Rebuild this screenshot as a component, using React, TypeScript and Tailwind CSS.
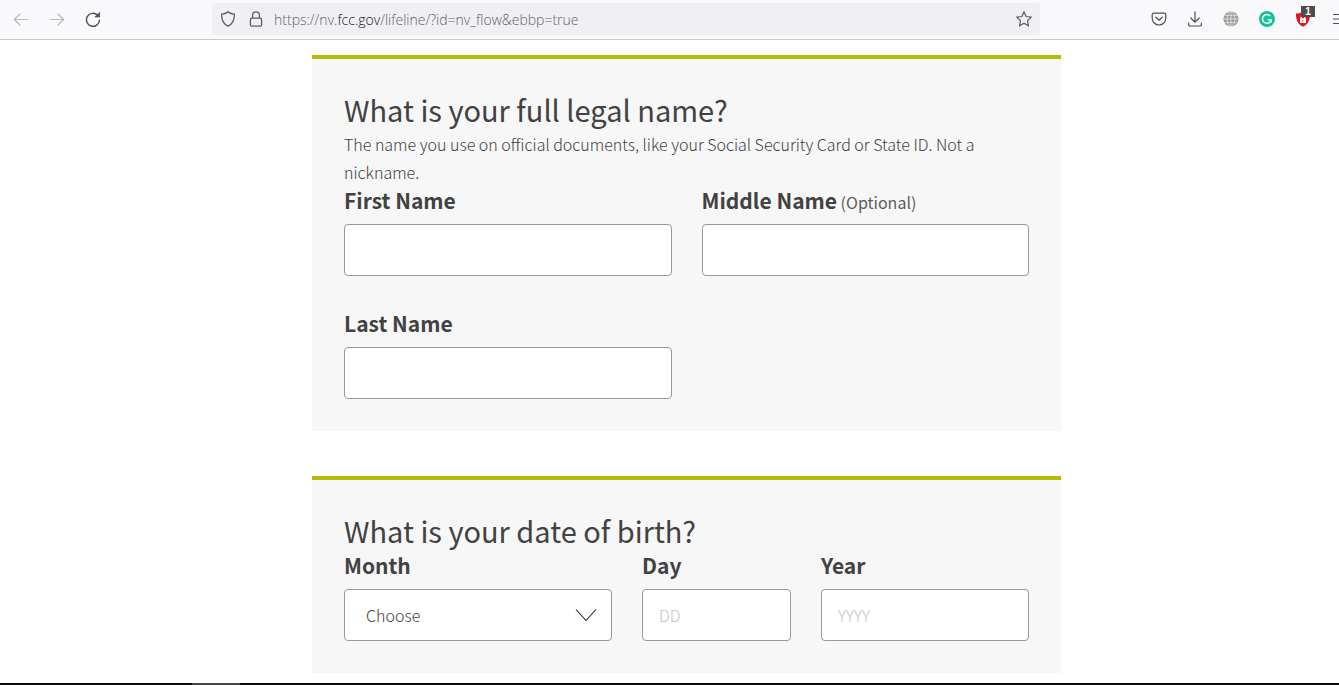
import { useState } from "react";
import type { ReactNode } from "react";

const labelClass = "block mb-[10px] text-[21px] leading-7 font-semibold";

const fieldClass =
  "w-full h-[52px] px-4 bg-white border border-[#999] rounded text-base font-light text-[#424242] placeholder:text-[#c4c4c4]";

const months = [
  "January",
  "February",
  "March",
  "April",
  "May",
  "June",
  "July",
  "August",
  "September",
  "October",
  "November",
  "December",
];

function ToolbarButton({ label, children }: { label: string; children: ReactNode }) {
  return (
    <button type="button" aria-label={label} className="flex w-9 h-9 shrink-0 items-center justify-center">
      {children}
    </button>
  );
}

function BrowserToolbar() {
  return (
    <header className="flex h-10 pb-px items-center border-b border-[#c8c8ca] bg-[#f9f9fb] overflow-hidden">
      <nav className="flex pl-[3px]">
        <ToolbarButton label="Back">
          <svg width="16" height="16" viewBox="0 0 16 16" fill="none" stroke="#b9b9be" strokeWidth="1.2" strokeLinecap="round" strokeLinejoin="round">
            <path d="M14.5 8.5H1.5M7 3L1.3 8.5L7 14" />
          </svg>
        </ToolbarButton>
        <ToolbarButton label="Forward">
          <svg width="16" height="16" viewBox="0 0 16 16" fill="none" stroke="#b9b9be" strokeWidth="1.2" strokeLinecap="round" strokeLinejoin="round">
            <path d="M1.5 8.5H14.5M9 3L14.7 8.5L9 14" />
          </svg>
        </ToolbarButton>
        <ToolbarButton label="Reload">
          <svg width="16" height="16" viewBox="0 0 16 16" fill="none" stroke="#4e4d58" strokeWidth="1.4" strokeLinecap="round">
            <path d="M12.6 4.2A6.5 6.5 0 1 0 14.5 9.1" />
            <path d="M14.6 1.7V5.9H10.4Z" fill="#4e4d58" strokeWidth="0.8" strokeLinejoin="round" />
          </svg>
        </ToolbarButton>
      </nav>

      <div className="flex flex-1 h-8 ml-[101px] mr-[101px] px-2 items-center rounded bg-[#f0f0f4]">
        <svg className="shrink-0" width="16" height="16" viewBox="0 0 16 16" fill="none" stroke="#5b5b66" strokeWidth="1.3" strokeLinejoin="round">
          <path d="M8 0.9Q10.8 2.9 14.4 3.2C14.6 8.6 12.6 12.9 8 15.2C3.4 12.9 1.4 8.6 1.6 3.2Q5.2 2.9 8 0.9Z" />
        </svg>
        <svg className="shrink-0 ml-3" width="16" height="16" viewBox="0 0 16 16" fill="none" stroke="#5b5b66" strokeWidth="1.3">
          <rect x="2.4" y="7.2" width="11.2" height="7.9" rx="1.6" />
          <path d="M4.6 7.2V4.2A3.4 3.4 0 0 1 11.4 4.2V7.2" />
        </svg>
        <p className="flex-1 ml-[10px] pt-px text-sm font-light text-[#62626a] font-['Open_Sans',sans-serif] whitespace-nowrap">
          https://nv.<span className="text-[#15141a]">fcc.gov</span>/lifeline/?id=nv_flow&amp;ebbp=true
        </p>
        <button type="button" aria-label="Bookmark this page">
          <svg width="16" height="16" viewBox="0 0 16 16" fill="none" stroke="#5b5b66" strokeWidth="1.2" strokeLinejoin="round">
            <path d="M8 0.8L10.1 5.5L15.3 6.1L11.5 9.6L12.5 14.8L8 12.2L3.5 14.8L4.5 9.6L0.7 6.1L5.9 5.5Z" />
          </svg>
        </button>
      </div>

      <div className="flex w-[198px] shrink-0 overflow-hidden">
        <ToolbarButton label="Save to Pocket">
          <svg width="16" height="16" viewBox="0 0 16 16" fill="none" stroke="#4e4d58" strokeWidth="1.2" strokeLinecap="round" strokeLinejoin="round">
            <path d="M2.6 2.2H13.4A1.4 1.4 0 0 1 14.8 3.6V7.2A6.8 6.8 0 0 1 1.2 7.2V3.6A1.4 1.4 0 0 1 2.6 2.2Z" />
            <path d="M4.8 6.2L8 9.2L11.2 6.2" />
          </svg>
        </ToolbarButton>
        <ToolbarButton label="Downloads">
          <svg width="16" height="16" viewBox="0 0 16 16" fill="none" stroke="#4e4d58" strokeWidth="1.2" strokeLinecap="round" strokeLinejoin="round">
            <path d="M8 0.8V11M3.8 7L8 11.2L12.2 7M1.6 12.2V13.6A1.4 1.4 0 0 0 3 15H13A1.4 1.4 0 0 0 14.4 13.6V12.2" />
          </svg>
        </ToolbarButton>
        <ToolbarButton label="Web extension">
          <svg width="16" height="16" viewBox="0 0 16 16" fill="none">
            <circle cx="8" cy="8" r="7.6" fill="#9d9d9d" />
            <path d="M0.5 8H15.5M1.5 4.4H14.5M1.5 11.6H14.5M8 0.5V15.5" stroke="#dcdcdc" strokeWidth="0.9" />
            <ellipse cx="8" cy="8" rx="3.8" ry="7.5" stroke="#dcdcdc" strokeWidth="0.9" />
          </svg>
        </ToolbarButton>
        <ToolbarButton label="Writing assistant">
          <svg width="16" height="16" viewBox="0 0 16 16" fill="none">
            <circle cx="8" cy="8" r="8" fill="#15c39a" />
            <path d="M11.2 5A4.4 4.4 0 1 0 12.2 8.8H8.8M12.2 8.8V11.6" stroke="#fff" strokeWidth="1.4" />
          </svg>
        </ToolbarButton>
        <button type="button" aria-label="Content blocker, 1 blocked" className="relative flex w-9 h-9 shrink-0 items-center justify-center">
          <svg width="16" height="16" viewBox="0 0 16 16">
            <path d="M8 0.5C10 2 12.5 2.6 15 2.6C15.2 8.8 13.2 13.5 8 15.8C2.8 13.5 0.8 8.8 1 2.6C3.5 2.6 6 2 8 0.5Z" fill="#e6141e" />
            <rect x="5" y="7.2" width="6" height="4.8" fill="#fff" />
            <path d="M6.2 7.2V5.6A1.8 1.8 0 0 1 9.8 5.6V7.2" fill="none" stroke="#fff" strokeWidth="1.1" />
            <path d="M8 8.8V10.4" stroke="#e6141e" strokeWidth="0.8" />
          </svg>
          <span className="absolute top-[5px] left-4 w-[14px] h-[11px] bg-[#4d4d4d] text-center text-[10px] leading-[11px] font-bold text-white font-['Liberation_Sans',sans-serif]">
            1
          </span>
        </button>
        <button type="button" aria-label="Open menu" className="flex h-9 shrink-0 items-center pl-[11px]">
          <svg width="16" height="16" viewBox="0 0 16 16" stroke="#4e4d58" strokeWidth="1.2" strokeLinecap="round">
            <path d="M1.5 3.5H14.5M1.5 8H14.5M1.5 12.5H14.5" />
          </svg>
        </button>
      </div>
    </header>
  );
}

function Question({ title, children }: { title: string; children: ReactNode }) {
  return (
    <section className="border-t-4 border-[#b5bd00] bg-[#f7f7f7] p-8">
      <h2 className="mb-[3px] text-[29px] leading-9">{title}</h2>
      {children}
    </section>
  );
}

type FieldProps = {
  id: string;
  label: string;
  optional?: boolean;
  placeholder?: string;
};

function TextField({ id, label, optional, placeholder }: FieldProps) {
  const [value, setValue] = useState("");

  return (
    <div className="min-w-0">
      <label htmlFor={id} className={labelClass}>
        {label}
        {optional && <span className="text-base leading-none font-normal text-[#5c5c5c]"> (Optional)</span>}
      </label>
      <input
        id={id}
        type="text"
        placeholder={placeholder}
        value={value}
        onChange={(e) => setValue(e.target.value)}
        className={fieldClass}
      />
    </div>
  );
}

function MonthField() {
  return (
    <div className="min-w-0">
      <label htmlFor="month" className={labelClass}>
        Month
      </label>
      <div className="relative">
        <select id="month" defaultValue="" className={`${fieldClass} appearance-none pl-[21px]`}>
          <option value="">Choose</option>
          {months.map((month) => (
            <option key={month} value={month}>
              {month}
            </option>
          ))}
        </select>
        <svg
          className="absolute right-[15px] top-5 pointer-events-none"
          width="22"
          height="13"
          viewBox="0 0 22 13"
          fill="none"
          stroke="#222"
          strokeWidth="1.1"
        >
          <path d="M1 0.5L11 11.5L21 0.5" />
        </svg>
      </div>
    </div>
  );
}

export default function App() {
  return (
    <div className="bg-white text-[#424242] font-['Noto_Sans_CJK_SC','Noto_Sans',sans-serif]">
      <BrowserToolbar />

      <main className="pl-[34px] pt-[15px] pb-[10px]">
        <form className="flex flex-col gap-[45px] w-full max-w-[749px] mx-auto" onSubmit={(e) => e.preventDefault()}>
          <Question title="What is your full legal name?">
            <p className="text-base leading-7 font-light">
              The name you use on official documents, like your Social Security Card or State ID. Not a nickname.
            </p>
            <div className="grid grid-cols-2 gap-x-[30px] gap-y-[33px]">
              <TextField id="first-name" label="First Name" />
              <TextField id="middle-name" label="Middle Name" optional />
              <TextField id="last-name" label="Last Name" />
            </div>
          </Question>

          <Question title="What is your date of birth?">
            <div className="grid grid-cols-[268fr_149fr_208fr] gap-x-[30px]">
              <MonthField />
              <TextField id="day" label="Day" placeholder="DD" />
              <TextField id="year" label="Year" placeholder="YYYY" />
            </div>
          </Question>
        </form>
      </main>

      {/* Desktop taskbar edge */}
      <footer className="h-[2px] bg-[#0c0809] pl-48">
        <div className="w-12 h-full bg-[#474345]" />
      </footer>
    </div>
  );
}
